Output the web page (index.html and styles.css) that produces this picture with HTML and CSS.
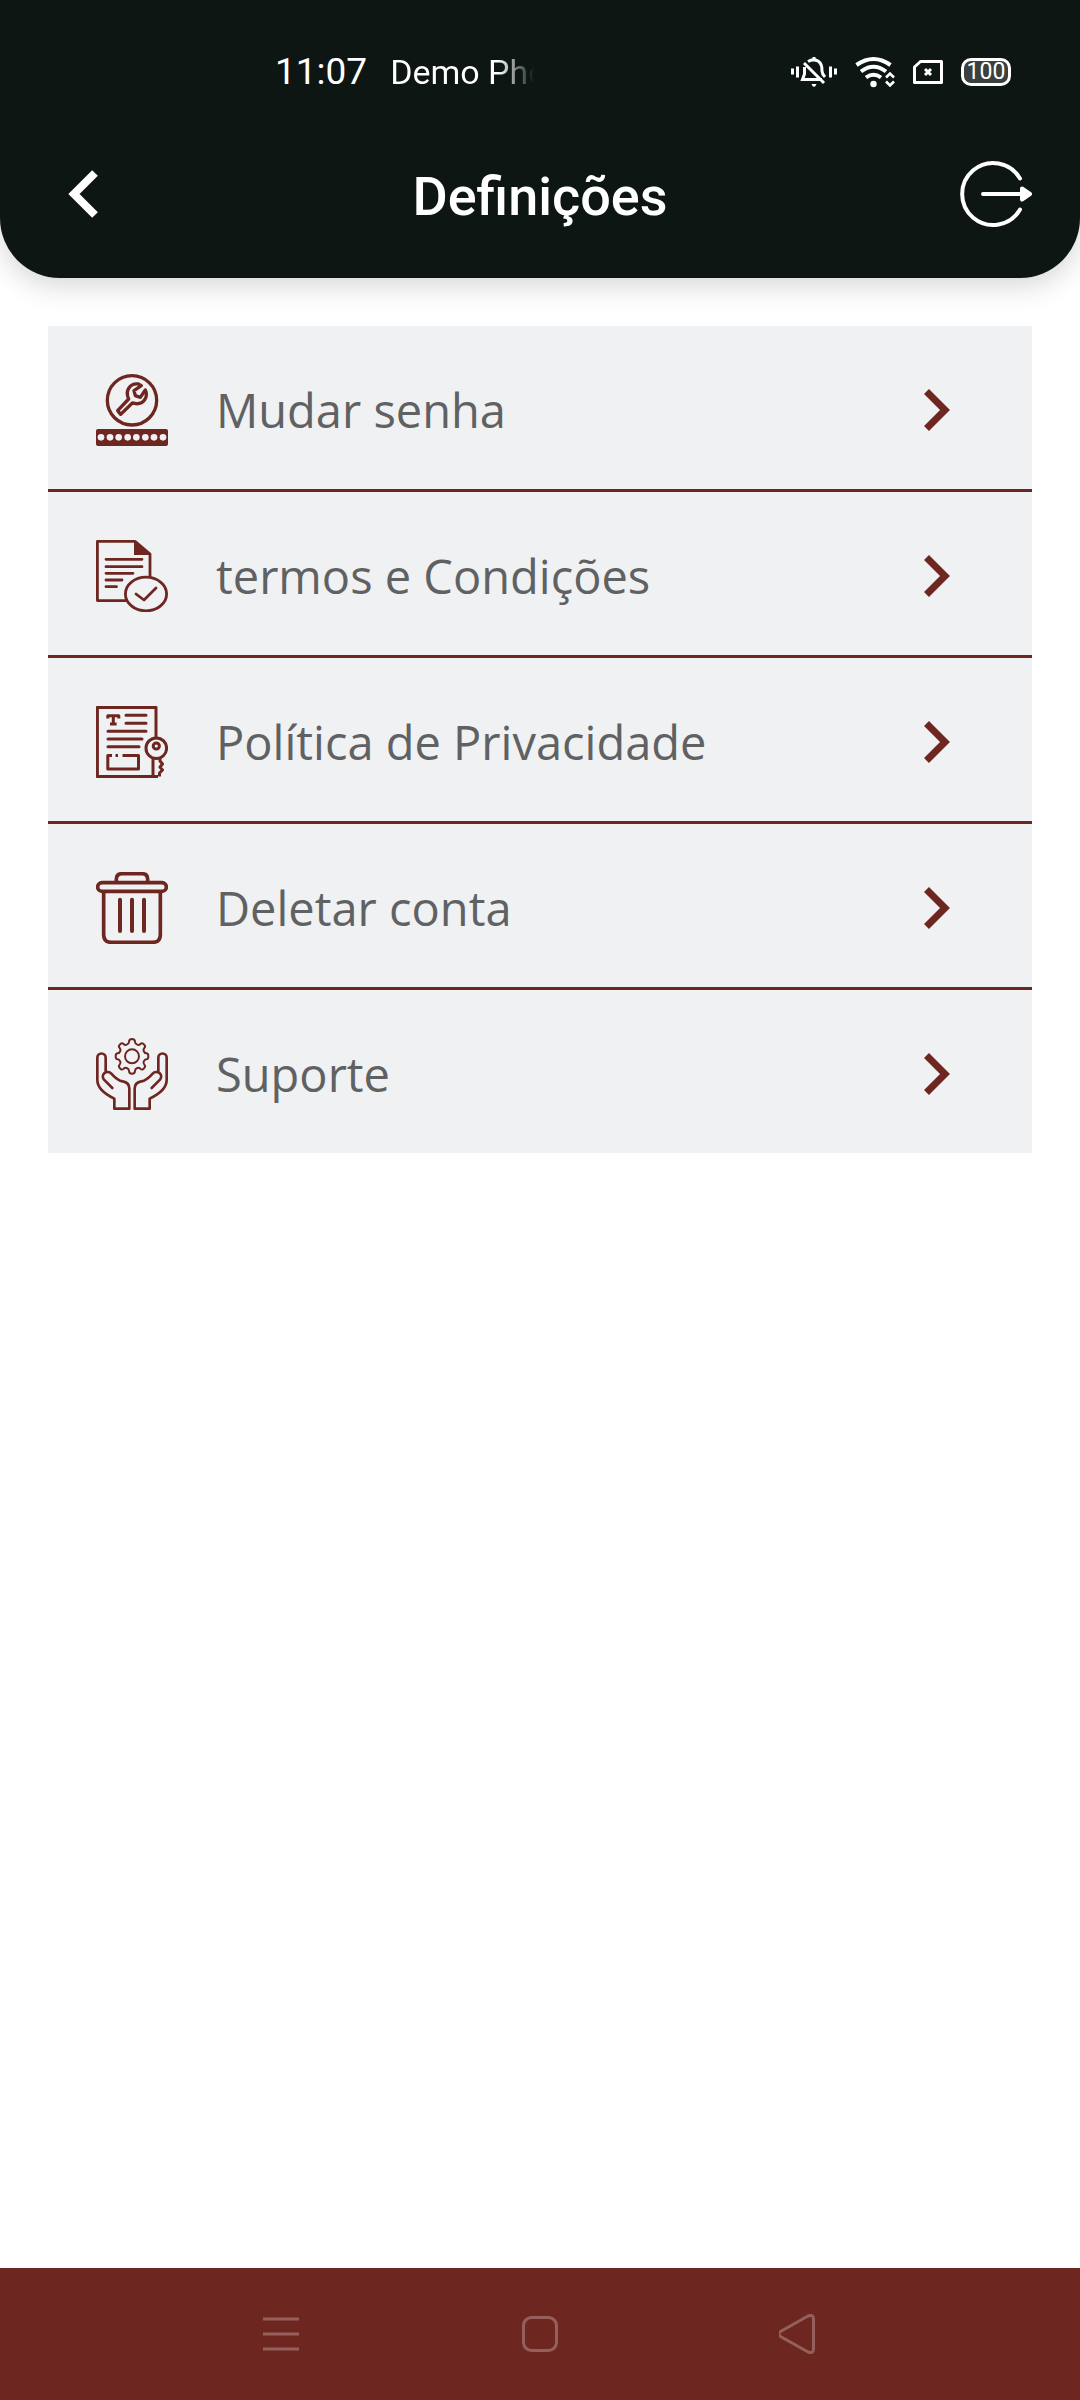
FILE: index.html
```html
<!DOCTYPE html>
<html lang="pt">
<head>
<meta charset="utf-8">
<meta name="viewport" content="width=device-width, initial-scale=1">
<title>Definições</title>
<link rel="stylesheet" href="styles.css">
</head>
<body>
<header class="header">
  <div class="status">
    <span class="clock">11:07</span>
    <span class="carrier">Demo Pho</span>
    <div class="status-icons">
      <svg width="46" height="32" viewBox="0 0 46 32" fill="none" stroke="#fff" stroke-width="3" aria-hidden="true">
        <path d="M1.500 12.500v6M6.500 10.500v11M39.500 10.500v11M44.500 12.500v6"/>
        <path d="M17 5.500Q22 2.500 27 5Q31.500 8 31 15M13.500 11V18L11.500 23.500H31M13 7L33 27M31 15Q31 18 34 21" stroke-width="3"/>
        <path d="M23 1v4" /><path d="M20.500 28h5q-1 3-2.500 3t-2.500-3z" fill="#fff" stroke="none"/>
      </svg>
      <svg width="40" height="32" viewBox="0 0 40 32" fill="none" stroke="#fff" stroke-width="4" aria-hidden="true">
        <path d="M1.500 9Q18.500-3 35.500 9M6 15.500Q18.500 6 31 15.500M11 21.500Q18.500 16 26 21.500"/>
        <circle cx="18.500" cy="28" r="3.200" fill="#fff" stroke="none"/>
        <path d="M31 21.500l4-4 4 4M31 25.500l4 4 4-4" stroke-width="2.600"/>
      </svg>
      <svg width="30" height="26" viewBox="0 0 30 26" fill="none" stroke="#fff" stroke-width="3" stroke-linejoin="round" aria-hidden="true">
        <path d="M7.500 2.500H28.500V23.500H1.500V8Z"/>
        <path d="M12 10l6 6M18 10l-6 6"/>
      </svg>
      <span class="battery">100</span>
    </div>
  </div>
  <div class="bar">
    <button class="back" type="button" aria-label="Voltar">
      <svg width="30" height="48" viewBox="0 0 30 48" fill="none" stroke="#fff" stroke-width="8" aria-hidden="true"><path d="M27 3L6 24L27 45"/></svg>
    </button>
    <h1 class="title">Definições</h1>
    <button class="logout" type="button" aria-label="Sair">
      <svg width="72" height="68" viewBox="0 0 72 68" fill="none" stroke="#fff" stroke-width="4" stroke-linecap="round" aria-hidden="true">
        <path d="M60 18.500A31 31 0 1 0 60 49.500M23 34H60"/>
        <path d="M62 28.500L70 34L62 39.500Z" fill="#fff" stroke-linejoin="round"/>
      </svg>
    </button>
  </div>
</header>

<main class="content">
  <ul class="menu">
    <li class="item"><a class="row" href="#senha">
      <svg class="icon" viewBox="48 72 216 216" aria-hidden="true">
        <circle cx="156" cy="151" r="74" stroke-width="10"/>
        <path stroke-width="10" stroke-linejoin="round" d="M113 182L146 147C134 122 150 99 175 102L184 107L162 122L166 137L181 142L196 120C206 142 190 163 168 161L157 159L122 193Z"/>
        <rect class="solid" x="48" y="237" width="216" height="51" rx="6"/>
        <g class="dots"><circle cx="63" cy="262" r="10"/><circle cx="90" cy="262" r="10"/><circle cx="116" cy="262" r="10"/><circle cx="143" cy="262" r="10"/><circle cx="169" cy="262" r="10"/><circle cx="196" cy="262" r="10"/><circle cx="222" cy="262" r="10"/><circle cx="249" cy="262" r="10"/></g>
      </svg>
      <span class="label">Mudar senha</span>
      <svg class="chevron" viewBox="0 0 26 42" aria-hidden="true"><path d="M2.500 2.500L21 21L2.500 39.500"/></svg>
    </a></li>
    <li class="item"><a class="row" href="#termos">
      <svg class="icon" viewBox="0 0 72 72" stroke-width="2.800" stroke-linejoin="round" aria-hidden="true">
        <path d="M30 60.600H1.400V1.400H39L54 14V37"/>
        <path class="solid" d="M38 0.500L55 15H38Z"/>
        <path stroke-linecap="round" d="M10 19.300H46M10 26.700H46M10 33.300H37M10 40H26M10 46.700H20.500"/>
        <ellipse cx="50" cy="54" rx="20.600" ry="16.800"/>
        <path stroke-linecap="round" d="M40 54L48 60L60 48"/>
      </svg>
      <span class="label">termos e Condições</span>
      <svg class="chevron" viewBox="0 0 26 42" aria-hidden="true"><path d="M2.500 2.500L21 21L2.500 39.500"/></svg>
    </a></li>
    <li class="item"><a class="row" href="#privacidade">
      <svg class="icon" viewBox="0 0 72 72" stroke-width="3" stroke-linejoin="round" aria-hidden="true">
        <path d="M60 32V1.400H1.400V70.600H62"/>
        <path d="M11.800 12.500V9.700H22.800V12.500M17.300 9.700V18M14 18H20.600"/>
        <path stroke-linecap="round" d="M30 9.300H50M30 17.300H50M12 25.300H50M12 33H46M12 40.700H43"/>
        <path d="M16 49.400H11.800V63H42.500V49.400H26.500M19.500 49.400H22"/>
        <circle cx="60.300" cy="42.200" r="10.300"/><circle cx="60.300" cy="40" r="3.100"/>
        <path d="M57 52V70.500M64 52V55L66.500 58L64 61L66.500 64L63.500 67V70.500"/>
      </svg>
      <span class="label">Política de Privacidade</span>
      <svg class="chevron" viewBox="0 0 26 42" aria-hidden="true"><path d="M2.500 2.500L21 21L2.500 39.500"/></svg>
    </a></li>
    <li class="item"><a class="row" href="#deletar">
      <svg class="icon" viewBox="48 66 216 216" stroke-width="11" aria-hidden="true">
        <rect x="53" y="98" width="206" height="26" rx="13"/>
        <path d="M109 97V88Q109 71 126 71H186Q203 71 203 88V97M71 126V254Q71 277 94 277H218Q241 277 241 254V126"/>
        <path stroke-width="12" stroke-linecap="round" d="M120 149V243M156 149V243M192 149V243"/>
      </svg>
      <span class="label">Deletar conta</span>
      <svg class="chevron" viewBox="0 0 26 42" aria-hidden="true"><path d="M2.500 2.500L21 21L2.500 39.500"/></svg>
    </a></li>
    <li class="item"><a class="row" href="#suporte">
      <svg class="icon" viewBox="48 54 216 216" stroke-width="8" stroke-linejoin="round" stroke-linecap="round" aria-hidden="true">
        <g id="hand"><path d="M77 155V113A12.500 12.500 0 0 0 52 113V180C52 208 78 224 103 236V266H148V206C148 194 142 186 128 184C112 182 104 172 94 161C82 148 60 162 72 179L97 204"/></g>
        <use href="#hand" transform="translate(312 0) scale(-1 1)"/>
        <circle cx="156" cy="109" r="21" stroke-width="6"/>
        <path stroke-width="6" d="M147 66Q147 57 156 57Q165 57 165 66Q165 71 172 74Q177 76 181 72Q187 67 192 73Q198 79 193 84Q189 88 191 93Q194 100 199 100Q205 100 205 109Q205 118 199 118Q194 118 191 125Q189 130 193 134Q198 139 192 145Q187 151 181 146Q177 142 172 144Q165 147 165 152Q165 161 156 161Q147 161 147 152Q147 147 140 144Q135 142 131 146Q125 151 120 145Q114 139 119 134Q123 130 121 125Q118 118 113 118Q107 118 107 109Q107 100 113 100Q118 100 121 93Q123 88 119 84Q114 79 120 73Q125 67 131 72Q135 76 140 74Q147 71 147 66Z"/>
      </svg>
      <span class="label">Suporte</span>
      <svg class="chevron" viewBox="0 0 26 42" aria-hidden="true"><path d="M2.500 2.500L21 21L2.500 39.500"/></svg>
    </a></li>
  </ul>
</main>

<nav class="system-nav" aria-label="Sistema">
  <button type="button" aria-label="Recentes"><svg width="40" height="40" viewBox="0 0 40 40" aria-hidden="true"><path d="M2 5H38M2 20H38M2 35H38"/></svg></button>
  <button type="button" aria-label="Início"><svg width="40" height="40" viewBox="0 0 40 40" aria-hidden="true"><rect x="3.500" y="3.500" width="33" height="33" rx="8"/></svg></button>
  <button type="button" aria-label="Anterior"><svg width="40" height="40" viewBox="0 0 40 40" aria-hidden="true"><path d="M1.500 17.500L29 2Q34.500 0 34.500 5V35Q34.500 40 29 38L1.500 22.500Q-2 20 1.500 17.500Z"/></svg></button>
</nav>
</body>
</html>
```
FILE: styles.css
```css
* {
  box-sizing: border-box;
}

body {
  margin: 0;
  min-height: 100vh;
  display: flex;
  flex-direction: column;
  background: #fff;
  font-family: Roboto, "Liberation Sans", sans-serif;
}

button {
  border: 0;
  padding: 0;
  background: none;
  font: inherit;
  cursor: pointer;
}

svg {
  display: block;
  flex: none;
}

.header {
  background: #0e1613;
  color: #fff;
  border-radius: 0 0 60px 60px;
  box-shadow: 0 8px 28px rgba(0, 0, 0, 0.16);
}

.status {
  display: flex;
  align-items: baseline;
  height: 110px;
  padding: 50px 69px 0 275px;
  line-height: 44px;
}

.clock {
  font-size: 37px;
}

.carrier {
  margin-left: 23px;
  white-space: nowrap;
  font-size: 34px;
  background: linear-gradient(90deg, #fff 108px, transparent 144px);
  background-clip: text;
  color: transparent;
}

.status-icons {
  display: flex;
  align-items: center;
  align-self: flex-start;
  height: 44px;
  gap: 18px;
  margin-left: auto;
}

.battery {
  width: 50px;
  height: 28px;
  border: 3px solid #fff;
  border-radius: 10px;
  background: #3a403e;
  font-size: 23px;
  line-height: 22px;
  text-align: center;
}

.bar {
  display: grid;
  grid-template-columns: 1fr auto 1fr;
  align-items: center;
  height: 168px;
  padding: 0 48px;
}

.back {
  justify-self: start;
  padding: 0 20px;
}

.logout {
  justify-self: end;
}

.title {
  margin: 0;
  padding-top: 6px;
  font-size: 54px;
  font-weight: 500;
  line-height: 64px;
}

.content {
  flex: 1;
  padding: 48px;
}

.menu {
  margin: 0;
  padding: 0;
  list-style: none;
  background: #f0f1f3;
}

.item + .item {
  border-top: 3px solid #6e2621;
}

.row {
  display: flex;
  align-items: center;
  gap: 48px;
  padding: 48px 82px 43px 48px;
  color: #606163;
  text-decoration: none;
}

.icon {
  width: 72px;
  height: 72px;
  fill: none;
  stroke: #6e2621;
}

.solid {
  fill: #6e2621;
  stroke: none;
}

.dots {
  fill: #f0f1f3;
  stroke: none;
}

.label {
  flex: 1;
  font-family: "Open Sans", "Noto Sans", sans-serif;
  font-size: 47px;
  line-height: 72px;
}

.chevron {
  width: 26px;
  height: 42px;
  fill: none;
  stroke: #6e2621;
  stroke-width: 7px;
}

.system-nav {
  display: flex;
  height: 132px;
  padding: 0 14%;
  background: #6e2621;
}

.system-nav button {
  flex: 1;
  display: flex;
  align-items: center;
  justify-content: center;
}

.system-nav svg {
  fill: none;
  stroke: #95605c;
  stroke-width: 3px;
}
```
